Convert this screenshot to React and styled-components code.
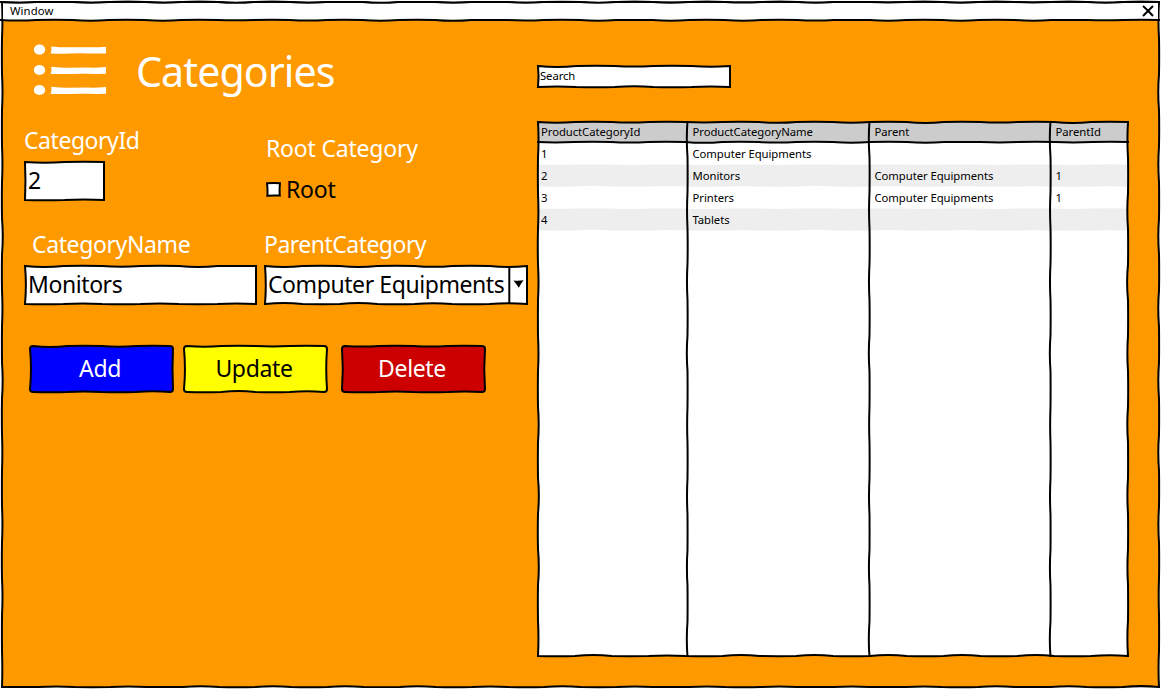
import React from "react";
import styled, { createGlobalStyle } from "styled-components";

const GlobalStyle = createGlobalStyle`
  *, *::before, *::after { box-sizing: border-box; }
  body { margin: 0; background: #fff; font-family: "Noto Sans", sans-serif; color: #000; }
  #root { width: 1161px; height: 689px; overflow: hidden; }
`;

/* ---------- hand-drawn outlines ---------- */

const random = (seed) => {
  let s = seed * 7919 + 17;
  return () => {
    s = (s * 1103515245 + 12345) % 2147483648;
    return s / 2147483648;
  };
};

// A smooth, slightly wavy continuation from (x1,y1) to (x2,y2).
const wavyTo = (x1, y1, x2, y2, rnd, amp) => {
  const len = Math.hypot(x2 - x1, y2 - y1);
  const n = Math.max(1, Math.round(len / 36));
  const nx = -(y2 - y1) / len;
  const ny = (x2 - x1) / len;
  let d = "";
  for (let i = 0; i < n; i++) {
    const off = (i % 2 ? -0.25 : 1) * amp * (0.6 + rnd() * 0.9);
    const m = (i + 0.5) / n;
    const e = (i + 1) / n;
    const mx = x1 + (x2 - x1) * m + nx * off;
    const my = y1 + (y2 - y1) * m + ny * off;
    d += ` Q${mx.toFixed(2)} ${my.toFixed(2)} ${(x1 + (x2 - x1) * e).toFixed(2)} ${(y1 + (y2 - y1) * e).toFixed(2)}`;
  }
  return d;
};

const wavyLine = (x1, y1, x2, y2, seed, amp = 1.2) =>
  `M${x1} ${y1}` + wavyTo(x1, y1, x2, y2, random(seed), amp);

const wavyBox = (w, h, seed, { amp = 1.5, inset = 1, radius = 0 } = {}) => {
  const rnd = random(seed);
  const c = radius;
  const [l, t, r, b] = [inset, inset, w - inset, h - inset];
  const sideAmp = h > 60 ? amp * 0.8 : c ? amp : 0;
  return (
    `M${l + c} ${t}` +
    wavyTo(l + c, t, r - c, t, rnd, amp) +
    (c ? `Q${r} ${t} ${r} ${t + c}` : "") +
    wavyTo(r, t + c, r, b - c, rnd, sideAmp) +
    (c ? `Q${r} ${b} ${r - c} ${b}` : "") +
    wavyTo(r - c, b, l + c, b, rnd, amp) +
    (c ? `Q${l} ${b} ${l} ${b - c}` : "") +
    wavyTo(l, b - c, l, t + c, rnd, h > 60 ? sideAmp : amp) +
    (c ? `Q${l} ${t} ${l + c} ${t}` : "") +
    "Z"
  );
};

const Drawing = styled.svg`
  position: absolute;
  left: 0;
  top: 0;
  z-index: ${(p) => (p.$over ? 1 : -1)};
  overflow: visible;
  pointer-events: none;
  fill: ${(p) => p.$fill || "none"};
  stroke: #000;
  stroke-width: 2;
`;

const Outline = ({ w, h, seed, fill = "#fff", radius }) => (
  <Drawing width={w} height={h} $fill={fill} aria-hidden="true">
    <path d={wavyBox(w, h, seed, { radius })} />
  </Drawing>
);

/* ---------- window ---------- */

const Window = styled.div`
  position: relative;
  isolation: isolate;
  width: 1161px;
  height: 689px;
  display: flex;
  flex-direction: column;
`;

const TitleBar = styled.header`
  height: 20px;
  padding: 2px 7px 0 10px;
  display: flex;
  align-items: center;
  justify-content: space-between;
  font-size: 11.3px;
  letter-spacing: 0.1px;
  line-height: 17px;
`;

const WindowTitle = styled.span`
  padding-bottom: 2px;
`;

const Content = styled.main`
  flex: 1;
  display: flex;
`;

/* ---------- left panel ---------- */

const FormPanel = styled.section`
  width: 537px;
  padding: 20px 0 0 24px;
`;

const Heading = styled.div`
  display: flex;
  align-items: center;
  gap: 29px;
  height: 60px;
  padding-left: 9px;
`;

const Title = styled.h1`
  margin: 0;
  padding-top: 2px;
  font-size: 41.2px;
  font-weight: 400;
  line-height: 56px;
  letter-spacing: -0.95px;
  color: #fff;
`;

const Fields = styled.div`
  display: grid;
  grid-template-columns: 240px 264px;
  grid-template-rows: 104px 76px;
  margin-top: 25px;
`;

const Field = styled.div`
  padding-top: ${(p) => p.$drop || 0}px;
`;

const Label = styled.div`
  margin: 0 0 ${(p) => (p.$gap ?? 6)}px ${(p) => p.$indent || 0}px;
  font-size: 23px;
  line-height: 30px;
  letter-spacing: ${(p) => p.$tracking ?? -0.45}px;
  color: #fff;
  white-space: nowrap;
`;

const TextBox = styled.div`
  position: relative;
  isolation: isolate;
  width: ${(p) => p.$w}px;
  height: ${(p) => p.$h || 40}px;
  padding: 0 0 ${(p) => (p.$small ? 3 : 2)}px ${(p) => (p.$small ? 3 : 4)}px;
  display: flex;
  align-items: center;
  font-size: ${(p) => (p.$small ? 11.3 : 23)}px;
  letter-spacing: ${(p) => (p.$small ? -0.08 : -0.42)}px;
  white-space: nowrap;
`;

const ComboArrow = styled.span`
  width: 19px;
  margin-left: auto;
  display: flex;
  justify-content: center;
`;

const CheckRow = styled.div`
  display: flex;
  align-items: center;
  gap: 5px;
  height: 30px;
  padding-left: 2px;
  font-size: 23px;
  line-height: 30px;
  letter-spacing: -0.2px;
`;

const Buttons = styled.div`
  display: flex;
  margin: 40px 0 0 5px;
`;

const Button = styled.button`
  position: relative;
  isolation: isolate;
  width: 145px;
  height: 48px;
  margin: 0 ${(p) => p.$after || 0}px 0 0;
  padding: 0 3px 3px 0;
  border: 0;
  background: none;
  font: inherit;
  font-size: 23px;
  letter-spacing: -0.35px;
  color: ${(p) => p.$ink};
`;

/* ---------- right panel ---------- */

const ListPanel = styled.section`
  padding-top: 45px;
`;

const Table = styled.div`
  position: relative;
  isolation: isolate;
  width: 592px;
  height: 536px;
  margin-top: 33px;
`;

const Row = styled.div`
  display: grid;
  grid-template-columns: 151.5px 182px 181px 1fr;
  height: 22px;
  padding: 0 0 1px 4px;
  align-items: center;
  font-size: 11.3px;
  line-height: 21px;
  letter-spacing: -0.06px;
  white-space: nowrap;
`;

const ListIcon = () => (
  <svg width="74" height="52" viewBox="0 0 74 52" fill="#fff" aria-hidden="true">
    {[5.6, 26, 46].map((y) => (
      <g key={y}>
        <ellipse cx="6.5" cy={y} rx="5.7" ry="5.1" />
        <path
          d={`M18.3 ${y - 3.2}q9 1 18 .9t18.5-.1q9 .3 18.2-.5v6.7q-9 .3-18 0t-18 .1t-19.4 0q1.3-3 .7-7.1z`}
        />
      </g>
    ))}
  </svg>
);

const columns = ["ProductCategoryId", "ProductCategoryName", "Parent", "ParentId"];
const rows = [
  ["1", "Computer Equipments", "", ""],
  ["2", "Monitors", "Computer Equipments", "1"],
  ["3", "Printers", "Computer Equipments", "1"],
  ["4", "Tablets", "", ""],
];

const TableDrawing = () => (
  <>
    <Drawing width="592" height="536" $fill="#fff">
      <path d={wavyBox(592, 536, 9)} stroke="none" />
      <path d={wavyLine(1, 1, 591, 1, 12) + " L590 21 L1 21 Z"} fill="#ccc" stroke="none" />
      {[43.5, 87.5].map((y) => (
        <path
          key={y}
          d={wavyLine(2, y, 590, y, 5, 0.9) + ` L590 ${y + 22}` + wavyTo(590, y + 22, 2, y + 22, random(8), 0.9) + "Z"}
          fill="#eee"
          stroke="none"
        />
      ))}
    </Drawing>
    <Drawing width="592" height="536" $over>
      <path d={wavyBox(592, 536, 9)} />
      <path d={wavyLine(0, 21, 592, 21, 12)} />
      {[150.5, 332.5, 513.5].map((x) => (
        <path key={x} d={wavyLine(x, 0, x, 536, 21, 1)} />
      ))}
    </Drawing>
  </>
);

export default function App() {
  return (
    <>
      <GlobalStyle />
      <Window>
        <Drawing width="1161" height="689" $fill="#f90">
          <path d={wavyBox(1161, 689, 3, { amp: 1.3, inset: 2 })} />
          <path d="M3 3H1158V20H3Z" fill="#fff" stroke="none" />
          <path d={wavyLine(0, 2, 1160, 2, 3, 1.2)} fill="none" />
          <path d={wavyLine(0, 20, 1160, 20, 6, 1.2)} fill="none" />
        </Drawing>
        <TitleBar>
          <WindowTitle>Window</WindowTitle>
          <svg width="12" height="12" viewBox="0 0 12 12" fill="none" stroke="#000" strokeWidth="2" aria-label="Close">
            <path d="M1 1 Q6 5.4 11 11M11 1 Q6.3 5.7 1 11" />
          </svg>
        </TitleBar>
        <Content>
          <FormPanel>
            <Heading>
              <ListIcon />
              <Title>Categories</Title>
            </Heading>
            <Fields>
              <Field>
                <Label>CategoryId</Label>
                <TextBox $w={81}>
                  <Outline w={81} h={40} seed={2} />2
                </TextBox>
              </Field>
              <Field $drop={8}>
                <Label $indent={2} $gap={11} $tracking={-0.2}>Root Category</Label>
                <CheckRow>
                  <svg width="15" height="15" viewBox="0 0 15 15" aria-hidden="true">
                    <path d="M1 1.3Q7 .7 14 1.2Q13.3 7 13.8 13.6Q7 13.3 1.4 13.8Q1.8 7 1 1.3Z" fill="#fff" stroke="#000" strokeWidth="2" />
                  </svg>
                  Root
                </CheckRow>
              </Field>
              <Field>
                <Label $indent={8} $tracking={-0.38}>CategoryName</Label>
                <TextBox $w={233}>
                  <Outline w={233} h={40} seed={4} />
                  Monitors
                </TextBox>
              </Field>
              <Field>
                <Label $tracking={-0.52}>ParentCategory</Label>
                <TextBox $w={264}>
                  <Drawing width="264" height="40" $fill="#fff">
                    <path d={wavyBox(264, 40, 7)} />
                    <path d="M245.3 1V39" />
                  </Drawing>
                  Computer Equipments
                  <ComboArrow>
                    <svg width="11" height="8" viewBox="0 0 11 8" aria-hidden="true">
                      <path d="M.4 .5Q5 1 10.6 .3Q8 3.5 5.8 7.8Q3.5 4 .4 .5Z" />
                    </svg>
                  </ComboArrow>
                </TextBox>
              </Field>
            </Fields>
            <Buttons>
              <Button $ink="#fff" $after={9}>
                <Outline w={145} h={48} seed={11} fill="#00f" radius={3} />
                Add
              </Button>
              <Button $ink="#000" $after={13}>
                <Outline w={145} h={48} seed={13} fill="#ff0" radius={3} />
                Update
              </Button>
              <Button $ink="#fff">
                <Outline w={145} h={48} seed={15} fill="#c00" radius={3} />
                Delete
              </Button>
            </Buttons>
          </FormPanel>
          <ListPanel>
            <TextBox $w={194} $h={23} $small>
              <Outline w={194} h={23} seed={17} />
              Search
            </TextBox>
            <Table>
              <TableDrawing />
              <Row>
                {columns.map((c) => (
                  <span key={c}>{c}</span>
                ))}
              </Row>
              {rows.map((r) => (
                <Row key={r[0]}>
                  {r.map((c, i) => (
                    <span key={i}>{c}</span>
                  ))}
                </Row>
              ))}
            </Table>
          </ListPanel>
        </Content>
      </Window>
    </>
  );
}
